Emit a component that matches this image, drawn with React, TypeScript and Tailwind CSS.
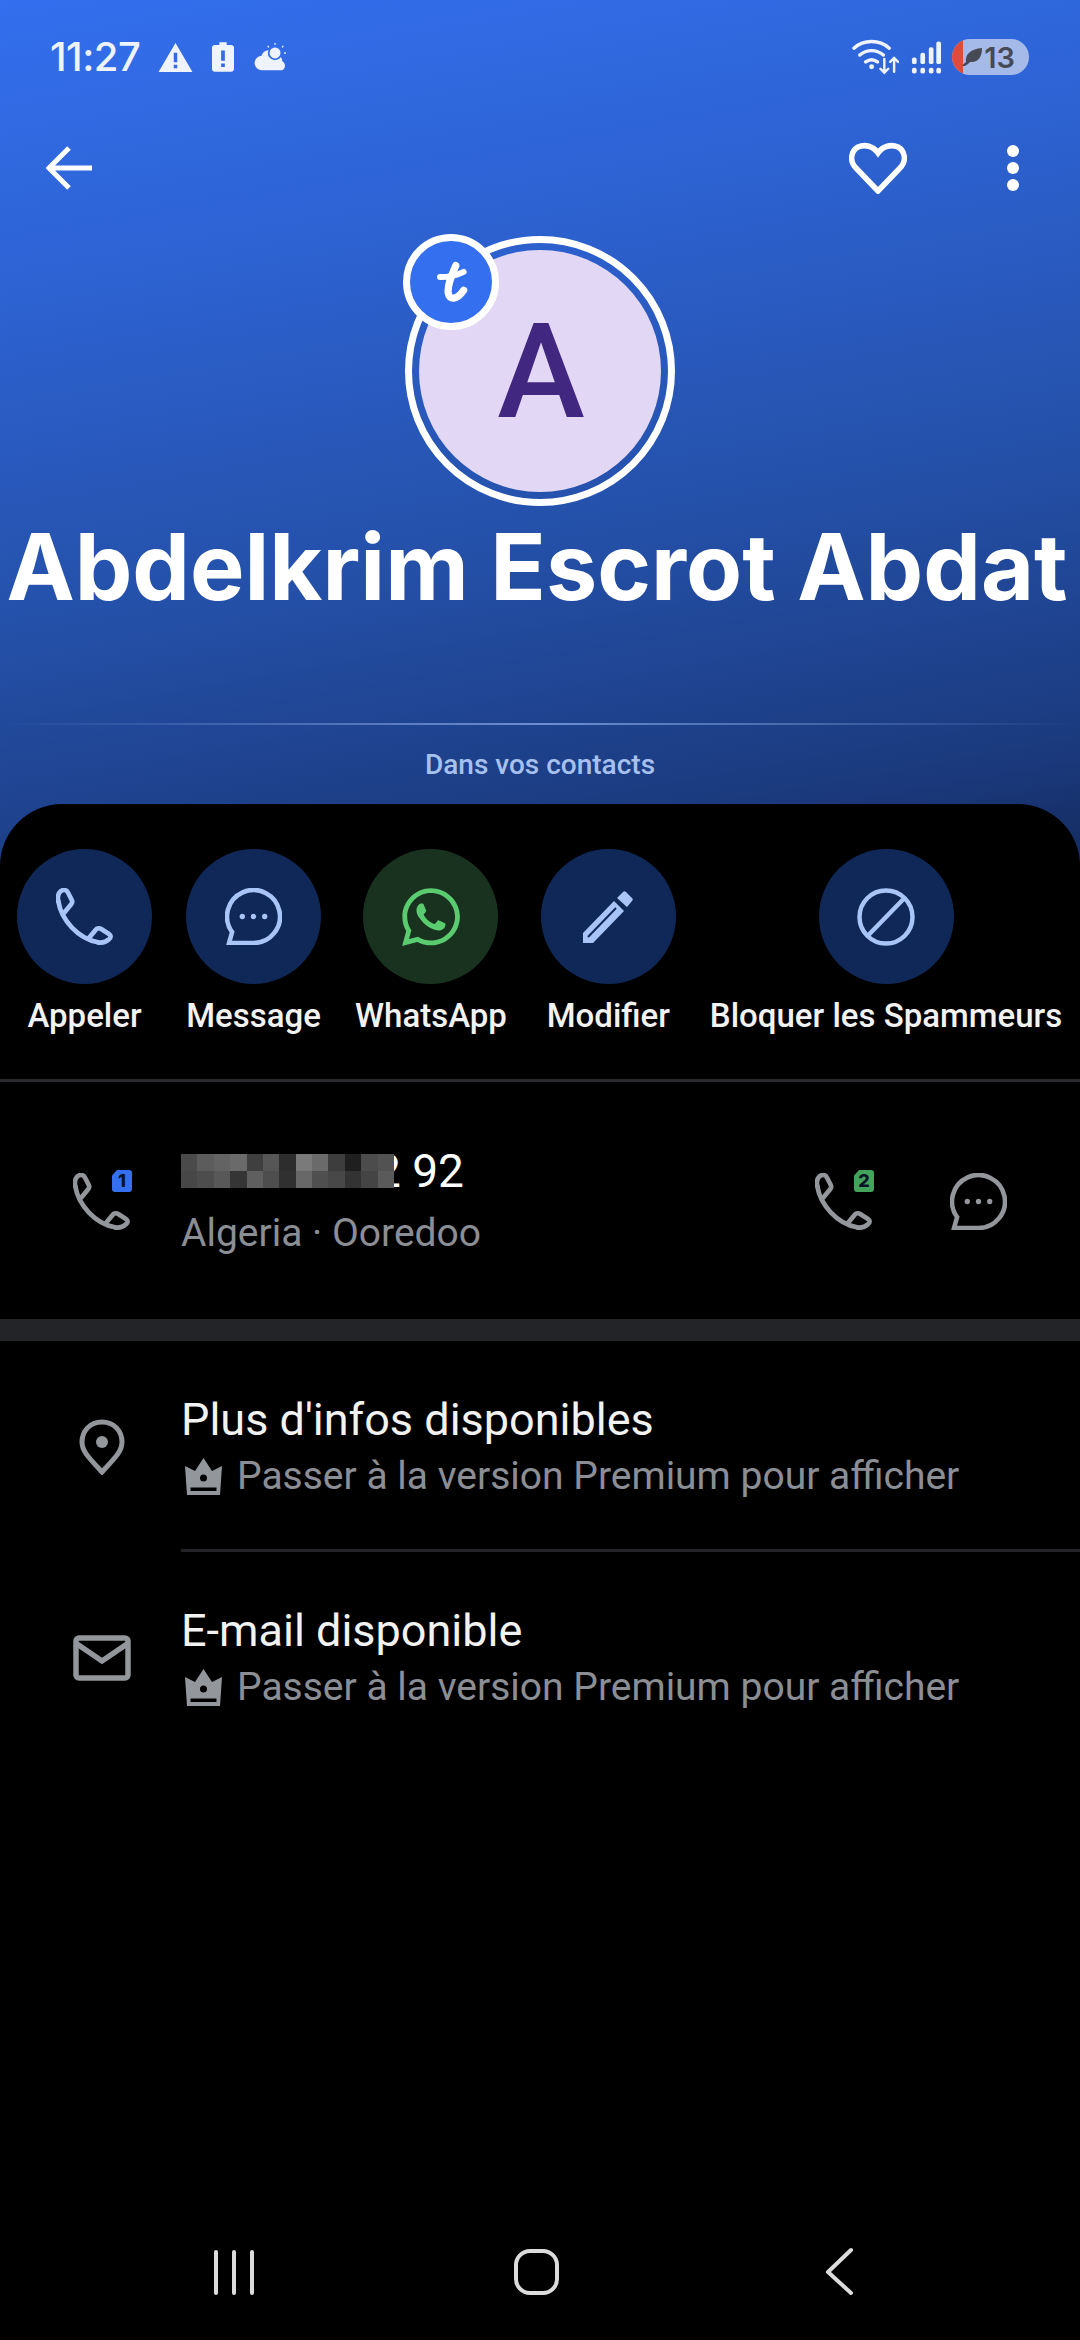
import React from "react";
import { FaWhatsapp } from "react-icons/fa";

const font = "font-['Roboto',sans-serif]";

// Handset: hollow lobes joined by a single curved stroke
const PhoneIcon = ({ className }: { className: string }) => (
  <svg viewBox="0 0 170 170" fill="none" className={className} stroke="currentColor" strokeWidth="14" strokeLinejoin="round" strokeLinecap="round">
    <path d="M7 40C16 95 65 150 125 162" />
    <path d="M7 40C2 20 12 6 24 6c6 0 10 4 12 8l11 22c3 6 1 10-3 14L25 73" />
    <path d="M100 147l18-22c4-6 12-6 18-2l22 14c6 4 7 10 0 16-10 9-22 11-33 9" />
  </svg>
);

const BubbleIcon = ({ className }: { className: string }) => (
  <svg viewBox="0 0 56 56" fill="none" className={className}>
    <path d="M28 54A26 26 0 1 0 7 43.300L4 54z" stroke="currentColor" strokeWidth="4.500" strokeLinejoin="miter" />
    <circle cx="17" cy="28" r="2.600" fill="currentColor" />
    <circle cx="28" cy="28" r="2.600" fill="currentColor" />
    <circle cx="39" cy="28" r="2.600" fill="currentColor" />
  </svg>
);

const PenIcon = () => (
  <svg viewBox="0 0 50 52" className="w-[50px] h-[52px] text-[#a9c5f7]" fill="none">
    <path d="M0 42L31 10l10 10-31 32H0z" fill="currentColor" />
    <path d="M5 46L33 17" stroke="#0f2857" strokeWidth="2" />
    <path d="M34 7l6-6c1-1 2-1 3 0l6 6c1 1 1 2 0 3l-5 6z" fill="currentColor" />
  </svg>
);

const BlockIcon = () => (
  <svg viewBox="0 0 60 60" className="w-[60px] h-[60px] text-[#a9c5f7]" fill="none">
    <circle cx="30" cy="30" r="26.500" stroke="currentColor" strokeWidth="4.500" />
    <path d="M11.500 49L48.500 11" stroke="currentColor" strokeWidth="4.500" />
  </svg>
);

const CrownIcon = () => (
  <svg viewBox="0 0 37 37" className="w-[37px] h-[37px] shrink-0 text-[#93969b]">
    <path
      fill="currentColor"
      fillRule="evenodd"
      d="M18.500 0L27 13l10-5-2 29H2L0 8l10 5zM5.500 29.500h26V33h-26z"
    />
    <circle cx="18.500" cy="20" r="3.500" fill="#000" />
  </svg>
);

const actions = [
  { label: "Appeler", icon: <PhoneIcon className="w-[57px] h-[57px] text-[#a9c5f7]" />, bg: "bg-[#0f2857]" },
  { label: "Message", icon: <BubbleIcon className="w-[57px] h-[57px] text-[#a9c5f7]" />, bg: "bg-[#0f2857]" },
  { label: "WhatsApp", icon: <FaWhatsapp className="w-[66px] h-[66px] text-[#5acb6e]" />, bg: "bg-[#18321f]" },
  { label: "Modifier", icon: <PenIcon />, bg: "bg-[#0f2857]" },
  { label: "Bloquer les Spammeurs", icon: <BlockIcon />, bg: "bg-[#0f2857]" },
];

// Mosaic over the hidden digits, two rows of grey tiles
const mosaic = [
  "#4a4a4a", "#5c5c5c", "#636363", "#6a6a6a", "#3f3f3f", "#565656", "#2d2d2d", "#7a7a7a", "#6a6a6a", "#3d3d3d", "#1f1f1f", "#4c4c4c", "#525252",
  "#474747", "#4d4d4d", "#585858", "#353535", "#5f5f5f", "#4e4e4e", "#303030", "#686868", "#4f4f4f", "#484848", "#333333", "#444444", "#5a5a5a",
];

const SimTag = ({ n, bg }: { n: number; bg: string }) => (
  <span
    className={`absolute left-[39px] -top-[3px] w-[20px] h-[22px] rounded-[3px] flex items-center justify-center text-[18px] font-extrabold leading-none text-[#0a1428] [clip-path:polygon(25%_0,100%_0,100%_100%,0_100%,0_25%)] ${bg} font-['Inter',sans-serif]`}
  >
    {n}
  </span>
);

const PremiumRow = ({
  icon,
  title,
  border,
}: {
  icon: React.ReactNode;
  title: string;
  border?: boolean;
}) => (
  <div className="flex">
    <div className="w-[181px] shrink-0 flex items-center justify-center pl-[23px]">{icon}</div>
    <div className={`flex-1 h-[211px] pt-[54px] ${border ? "border-b-[3px] border-[#232428]" : ""}`}>
      <div className="text-[45px] leading-[50px] text-[#f2f2f2]">{title}</div>
      <div className="flex items-center gap-[15px] pl-[4px] mt-[7px]">
        <CrownIcon />
        <span className="text-[39px] leading-[48px] text-[#8b8e94]">
          Passer à la version Premium pour afficher
        </span>
      </div>
    </div>
  </div>
);

export default function App() {
  return (
    <div className={`relative w-[1080px] h-[2340px] bg-black overflow-hidden ${font}`}>
      {/* Blue header */}
      <div className="h-[870px] bg-[linear-gradient(170deg,#336fee_0%,#2d62d2_28%,#2450a8_60%,#1b3a7e_88%,#132a5e_100%)] flex flex-col">
        {/* Status bar */}
        <div className="h-[141px] pl-[50px] pr-[51px] pt-[34px] flex justify-between items-start text-[#eef3fd]">
          <div className="flex items-center">
            <span className="text-[40px] leading-[46px] font-medium font-['Inter',sans-serif] tracking-[-0.5px]">11:27</span>
            <svg viewBox="0 0 36 32" className="w-[35px] h-[31px] ml-[18px]">
              <path fill="currentColor" fillRule="evenodd" d="M18 1l17.500 30H.5zM16.200 11h3.600v10h-3.600zm0 12.500h3.600v3.500h-3.600z" />
            </svg>
            <svg viewBox="0 0 24 32" className="w-[22px] h-[32px] ml-[19px]">
              <path fill="currentColor" fillRule="evenodd" d="M8 0h8v3h5c1.500 0 3 1.200 3 3v23c0 1.800-1.500 3-3 3H3c-1.500 0-3-1.200-3-3V6c0-1.800 1.500-3 3-3h5zM10 9h4v11h-4zm0 14h4v4h-4z" />
            </svg>
            <svg viewBox="0 0 36 32" className="w-[33px] h-[29px] ml-[20px]">
              <path fill="currentColor" d="M9 30a8 8 0 0 1-1-16 10 10 0 0 1 18-1 8 8 0 0 1 5 7c2 1 3 3 3 5 0 3-2 5-4 5z" />
              <circle cx="23" cy="11" r="7" fill="currentColor" stroke="#336fee" strokeWidth="2" />
              <path d="M23 0v2M32 3l-1 2M35 11h-2M15 3l1 2" stroke="currentColor" strokeWidth="1.500" />
            </svg>
          </div>
          <div className="flex items-center mt-[5px]">
            <svg viewBox="0 0 48 36" className="w-[47px] h-[36px]" fill="none" stroke="currentColor" strokeWidth="3.500" strokeLinecap="round">
              <path d="M2 9c10-9 26-9 36 0M8 16c7-6 17-6 24 0M14 23c4-3 8-3 12 0" />
              <circle cx="20" cy="28" r="2.500" fill="currentColor" stroke="none" />
              <path d="M33 20v14M29 30l4 4 4-4M43 33V19M39 23l4-4 4 4" strokeWidth="2.500" />
            </svg>
            <svg viewBox="0 0 32 34" className="w-[30px] h-[33px] ml-[12px]" fill="currentColor">
              <rect x="1" y="17" width="5" height="7" rx="2" />
              <rect x="10" y="12" width="5" height="12" rx="2" />
              <rect x="19" y="6" width="5" height="18" rx="2" />
              <rect x="27" y="0" width="5" height="24" rx="2" />
              <rect x="1" y="28" width="5" height="6" rx="2" />
              <rect x="10" y="28" width="5" height="6" rx="2" />
              <rect x="19" y="28" width="5" height="6" rx="2" />
              <rect x="27" y="28" width="5" height="6" rx="2" />
            </svg>
            {/* Battery pill, red sliver is the charge level */}
            <div className="relative ml-[11px] w-[77px] h-[36px] rounded-full bg-[#a5bae8] overflow-hidden flex items-center justify-end pr-[14px] text-[#464a54] text-[29px] font-semibold font-['Inter',sans-serif] leading-none">
              <span className="absolute left-0 top-0 bottom-0 w-[11px] bg-[#df4a3f]" />
              <svg viewBox="0 0 20 20" className="absolute left-[10px] top-[8px] w-[20px] h-[20px]" fill="currentColor">
                <path d="M0 19c1-1 2-3 4-4C3 7 9 2 20 1c0 9-4 15-12 14-1 1-3 3-5 4z" />
              </svg>
              13
            </div>
          </div>
        </div>

        {/* Toolbar */}
        <div className="h-[54px] pl-[46px] pr-[61px] flex items-center justify-between text-white">
          <svg viewBox="0 0 46 46" className="w-[46px] h-[46px]" fill="none" stroke="currentColor" strokeWidth="5">
            <path d="M46 23H4M23 3L3 23l20 20" />
          </svg>
          <div className="flex items-center gap-[100px]">
            <svg viewBox="0 0 58 52" className="w-[58px] h-[52px]" fill="none" stroke="currentColor" strokeWidth="5.500" strokeLinejoin="miter">
              <path d="M29 49L7 26C0 19 2 9 9 5c7-3 15-1 20 6 5-7 13-9 20-6 7 4 9 14 2 21z" />
            </svg>
            <div className="flex flex-col gap-[5px]">
              <span className="w-[12px] h-[12px] rounded-full bg-white" />
              <span className="w-[12px] h-[12px] rounded-full bg-white" />
              <span className="w-[12px] h-[12px] rounded-full bg-white" />
            </div>
          </div>
        </div>

        {/* Avatar */}
        <div className="flex justify-center mt-[41px]">
          <div className="relative w-[270px] h-[270px] rounded-full border-[7px] border-white p-[7px]">
            <div className="w-full h-full rounded-full bg-[#e2d8f5] flex items-center justify-center text-[#41277f] text-[132px] leading-none font-medium pt-[2px] pl-[2px]">
              A
            </div>
            <div className="absolute -left-[9px] -top-[9px] w-[96px] h-[96px] rounded-full bg-[#336fee] border-[7px] border-white flex items-center justify-center">
              <svg viewBox="195 145 100 140" className="w-[33px] h-[46px]" fill="none" stroke="#fff" strokeLinecap="round">
                <path d="M258 165C245 195 232 225 235 248c3 24 27 22 47-8" strokeWidth="22" />
                <path d="M210 200c25 0 50-5 72-16" strokeWidth="18" />
              </svg>
            </div>
          </div>
        </div>

        <div className="mt-[6px] pr-[6px] text-center text-white text-[91.500px] leading-[110px] font-bold whitespace-nowrap font-['Inter',sans-serif]">
          Abdelkrim Escrot Abdat
        </div>

        <div className="mt-[101px] h-[2px] bg-gradient-to-r from-transparent via-[#6d8fd0] to-transparent" />
        <div className="mt-[22px] text-center text-[28px] leading-[36px] font-medium text-[#a7c1ee]">Dans vos contacts</div>
      </div>

      {/* Black sheet */}
      <div className="absolute left-0 right-0 top-[804px] rounded-t-[62px] bg-black">
        <div className="flex pt-[45px] h-[278px] border-b-[3px] border-[#2a2b2f]">
          {actions.map((a) => (
            <div key={a.label} className="flex flex-col items-center px-[17px] shrink-0">
              <div className={`w-[135px] h-[135px] rounded-full flex items-center justify-center ${a.bg}`}>{a.icon}</div>
              <div className="mt-[10px] text-[33px] leading-[44px] font-medium text-[#f2f2f2] whitespace-nowrap">{a.label}</div>
            </div>
          ))}
        </div>

        {/* Number row */}
        <div className="flex h-[237px] items-start">
          <div className="relative w-[181px] shrink-0 pl-[73px] pt-[91px] text-[#93969b]">
            <PhoneIcon className="w-[57px] h-[57px]" />
            <span className="absolute left-[73px] top-[91px]">
              <SimTag n={1} bg="bg-[#336fee]" />
            </span>
          </div>
          <div className="flex-1 pt-[72px]">
            <div className="flex items-center h-[34px] text-[46px] leading-none text-white">
              <div className="relative z-10 grid grid-cols-[repeat(13,1fr)] w-[213px] h-[34px]">
                {mosaic.map((c, i) => (
                  <span key={i} style={{ background: c }} />
                ))}
              </div>
              <span className="-ml-[19px]">2 92</span>
            </div>
            <div className="mt-[22px] text-[39px] leading-[46px] text-[#8b8e94]">Algeria · Ooredoo</div>
          </div>
          <div className="relative w-[57px] mr-[78px] pt-[91px] text-[#93969b]">
            <PhoneIcon className="w-[57px] h-[57px]" />
            <span className="absolute left-0 top-[91px]">
              <SimTag n={2} bg="bg-[#43a35a]" />
            </span>
          </div>
          <div className="pt-[91px] mr-[73px]">
            <BubbleIcon className="w-[57px] h-[57px] text-[#93969b]" />
          </div>
        </div>

        <div className="h-[22px] bg-[#232428]" />

        <PremiumRow
          border
          title="Plus d'infos disponibles"
          icon={
            <svg viewBox="0 0 46 56" className="w-[46px] h-[56px] text-[#93969b]" fill="none">
              <path d="M23 3C11 3 3 12 3 23c0 9 6 15 20 30 14-15 20-21 20-30C43 12 35 3 23 3z" stroke="currentColor" strokeWidth="5" />
              <circle cx="23" cy="23" r="6" fill="currentColor" />
            </svg>
          }
        />
        <PremiumRow
          title="E-mail disponible"
          icon={
            <svg viewBox="0 0 58 46" className="w-[58px] h-[46px] text-[#93969b]" fill="none" stroke="currentColor" strokeWidth="5.500">
              <rect x="3" y="3" width="52" height="40" rx="3" />
              <path d="M4 9l25 17 25-17" />
            </svg>
          }
        />
      </div>

      {/* Android nav bar */}
      <div className="absolute left-0 right-0 top-[2240px] h-[64px] text-[#dcdcdc]">
        <svg viewBox="0 0 1080 64" className="w-[1080px] h-[64px]" fill="none" stroke="currentColor" strokeWidth="4" strokeLinecap="round" strokeLinejoin="round">
          <path d="M216 12v41M234 12v41M252 12v41" />
          <rect x="516" y="11" width="41" height="42" rx="14" />
          <path d="M851 10l-23 22 23 21" />
        </svg>
      </div>
    </div>
  );
}
